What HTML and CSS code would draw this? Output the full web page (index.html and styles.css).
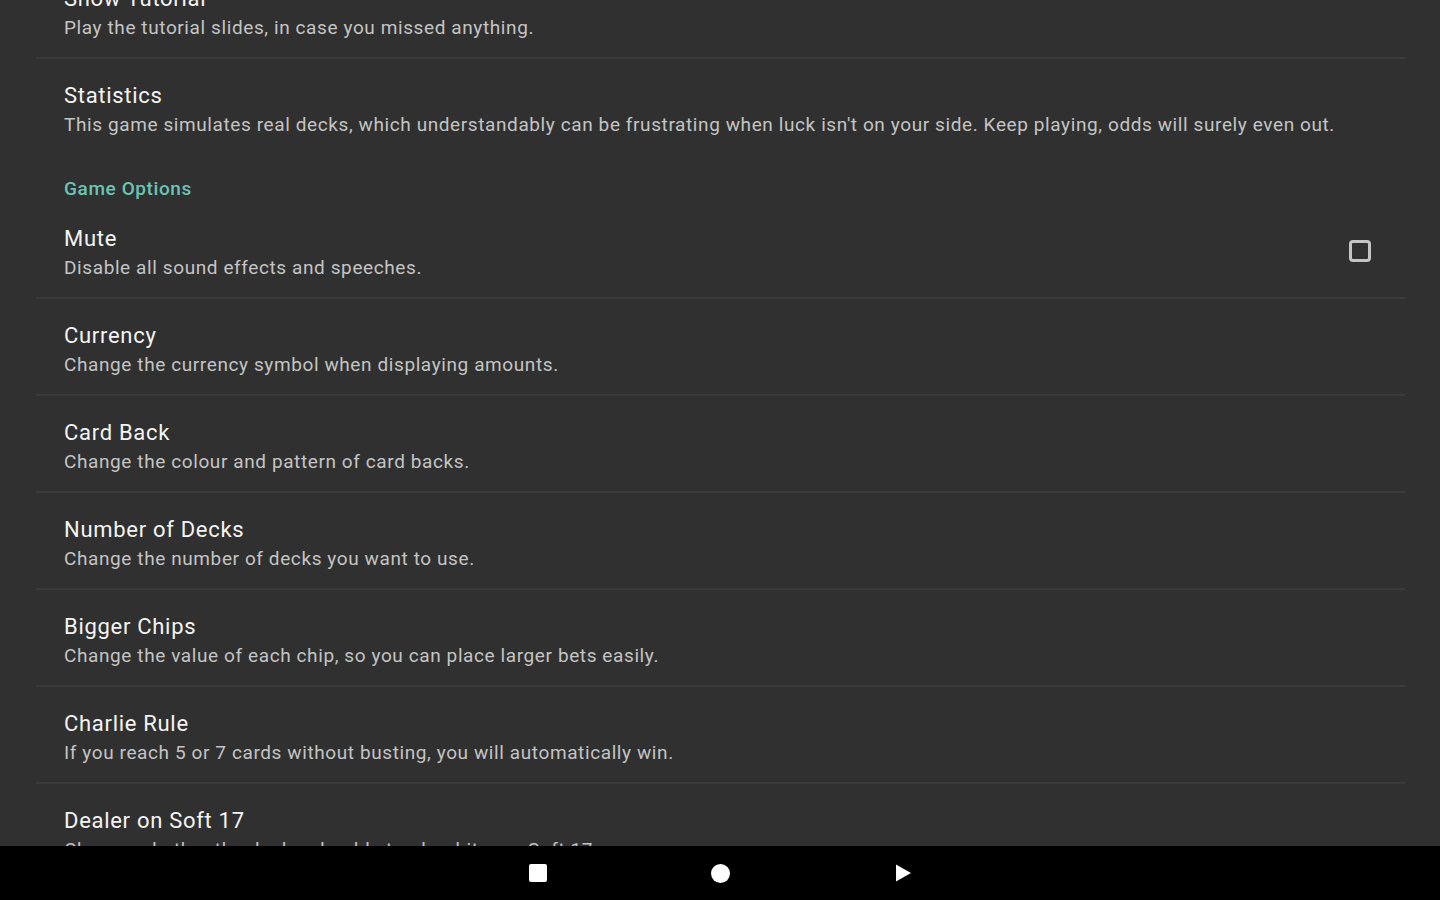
FILE: index.html
```html
<!DOCTYPE html>
<html lang="en">
<head>
    <meta charset="UTF-8">
    <meta name="viewport" content="width=device-width, initial-scale=1.0">
    <title>Settings</title>
    <link rel="stylesheet" href="styles.css">
</head>
<body>
    <div class="screen">
        <div class="settings">
            <ul class="pref-list">
                <li class="pref">
                    <div class="pref-text">
                        <div class="pref-title">Show Tutorial</div>
                        <div class="pref-summary">Play the tutorial slides, in case you missed anything.</div>
                    </div>
                </li>
                <li class="pref last">
                    <div class="pref-text">
                        <div class="pref-title">Statistics</div>
                        <div class="pref-summary">This game simulates real decks, which understandably can be frustrating when luck isn't on your side. Keep playing, odds will surely even out.</div>
                    </div>
                </li>

                <li class="pref-category">Game Options</li>

                <li class="pref">
                    <div class="pref-text">
                        <div class="pref-title">Mute</div>
                        <div class="pref-summary">Disable all sound effects and speeches.</div>
                    </div>
                    <span class="checkbox"></span>
                </li>
                <li class="pref">
                    <div class="pref-text">
                        <div class="pref-title">Currency</div>
                        <div class="pref-summary">Change the currency symbol when displaying amounts.</div>
                    </div>
                </li>
                <li class="pref">
                    <div class="pref-text">
                        <div class="pref-title">Card Back</div>
                        <div class="pref-summary">Change the colour and pattern of card backs.</div>
                    </div>
                </li>
                <li class="pref">
                    <div class="pref-text">
                        <div class="pref-title">Number of Decks</div>
                        <div class="pref-summary">Change the number of decks you want to use.</div>
                    </div>
                </li>
                <li class="pref">
                    <div class="pref-text">
                        <div class="pref-title">Bigger Chips</div>
                        <div class="pref-summary">Change the value of each chip, so you can place larger bets easily.</div>
                    </div>
                </li>
                <li class="pref">
                    <div class="pref-text">
                        <div class="pref-title">Charlie Rule</div>
                        <div class="pref-summary">If you reach 5 or 7 cards without busting, you will automatically win.</div>
                    </div>
                </li>
                <li class="pref">
                    <div class="pref-text">
                        <div class="pref-title">Dealer on Soft 17</div>
                        <div class="pref-summary">Change whether the dealer should stand or hit on a Soft 17.</div>
                    </div>
                </li>
            </ul>
        </div>

        <div class="navbar">
            <span class="nav-btn nav-recent"></span>
            <span class="nav-btn nav-home"></span>
            <svg class="nav-back" width="18" height="18" viewBox="0 0 18 18">
                <path d="M2 0.5 L17 9 L2 17.5 Z" fill="#fff"/>
            </svg>
        </div>
    </div>
</body>
</html>
```

FILE: styles.css
```css
* {
    margin: 0;
    padding: 0;
    box-sizing: border-box;
}

body {
    background-color: #303030;
    font-family: Roboto, "Liberation Sans", sans-serif;
    color: #fff;
}

.screen {
    height: 900px;
    display: flex;
    flex-direction: column;
    overflow: hidden;
}

.settings {
    flex: 1;
    overflow: hidden;
}

/* list is scrolled: first row is partly off screen */
.pref-list {
    list-style: none;
    margin-top: -38px;
}

.pref {
    display: flex;
    align-items: center;
    height: 97px;
    margin: 0 35px 0 36px;
    padding: 22px 34px 15px 28px;
    border-bottom: 2px solid #3a3a3a;
}

.pref.last {
    border-bottom: none;
    height: 96px;
}

.pref-text {
    flex: 1;
    align-self: flex-start;
}

.pref-title {
    font-size: 22px;
    line-height: 30px;
    letter-spacing: 0.7px;
    color: #f4f4f4;
}

.pref-summary {
    font-size: 19px;
    line-height: 28px;
    letter-spacing: 0.6px;
    color: #c4c4c4;
    white-space: nowrap;
}

.pref-category {
    height: 47px;
    padding: 22px 0 0 64px;
    font-size: 19px;
    line-height: 24px;
    letter-spacing: 0.6px;
    font-weight: 500;
    color: #6cc4b6;
}

.checkbox {
    width: 22px;
    height: 22px;
    border: 3px solid #c4c4c4;
    border-radius: 4px;
    margin-bottom: 5px;
}

.navbar {
    height: 54px;
    flex-shrink: 0;
    background-color: #000;
    display: flex;
    align-items: center;
    justify-content: center;
    gap: 164px;
}

.nav-btn {
    display: block;
    width: 18px;
    height: 18px;
    background-color: #fff;
}

.nav-recent {
    border-radius: 2px;
}

.nav-home {
    border-radius: 50%;
    width: 19px;
    height: 19px;
}
```
